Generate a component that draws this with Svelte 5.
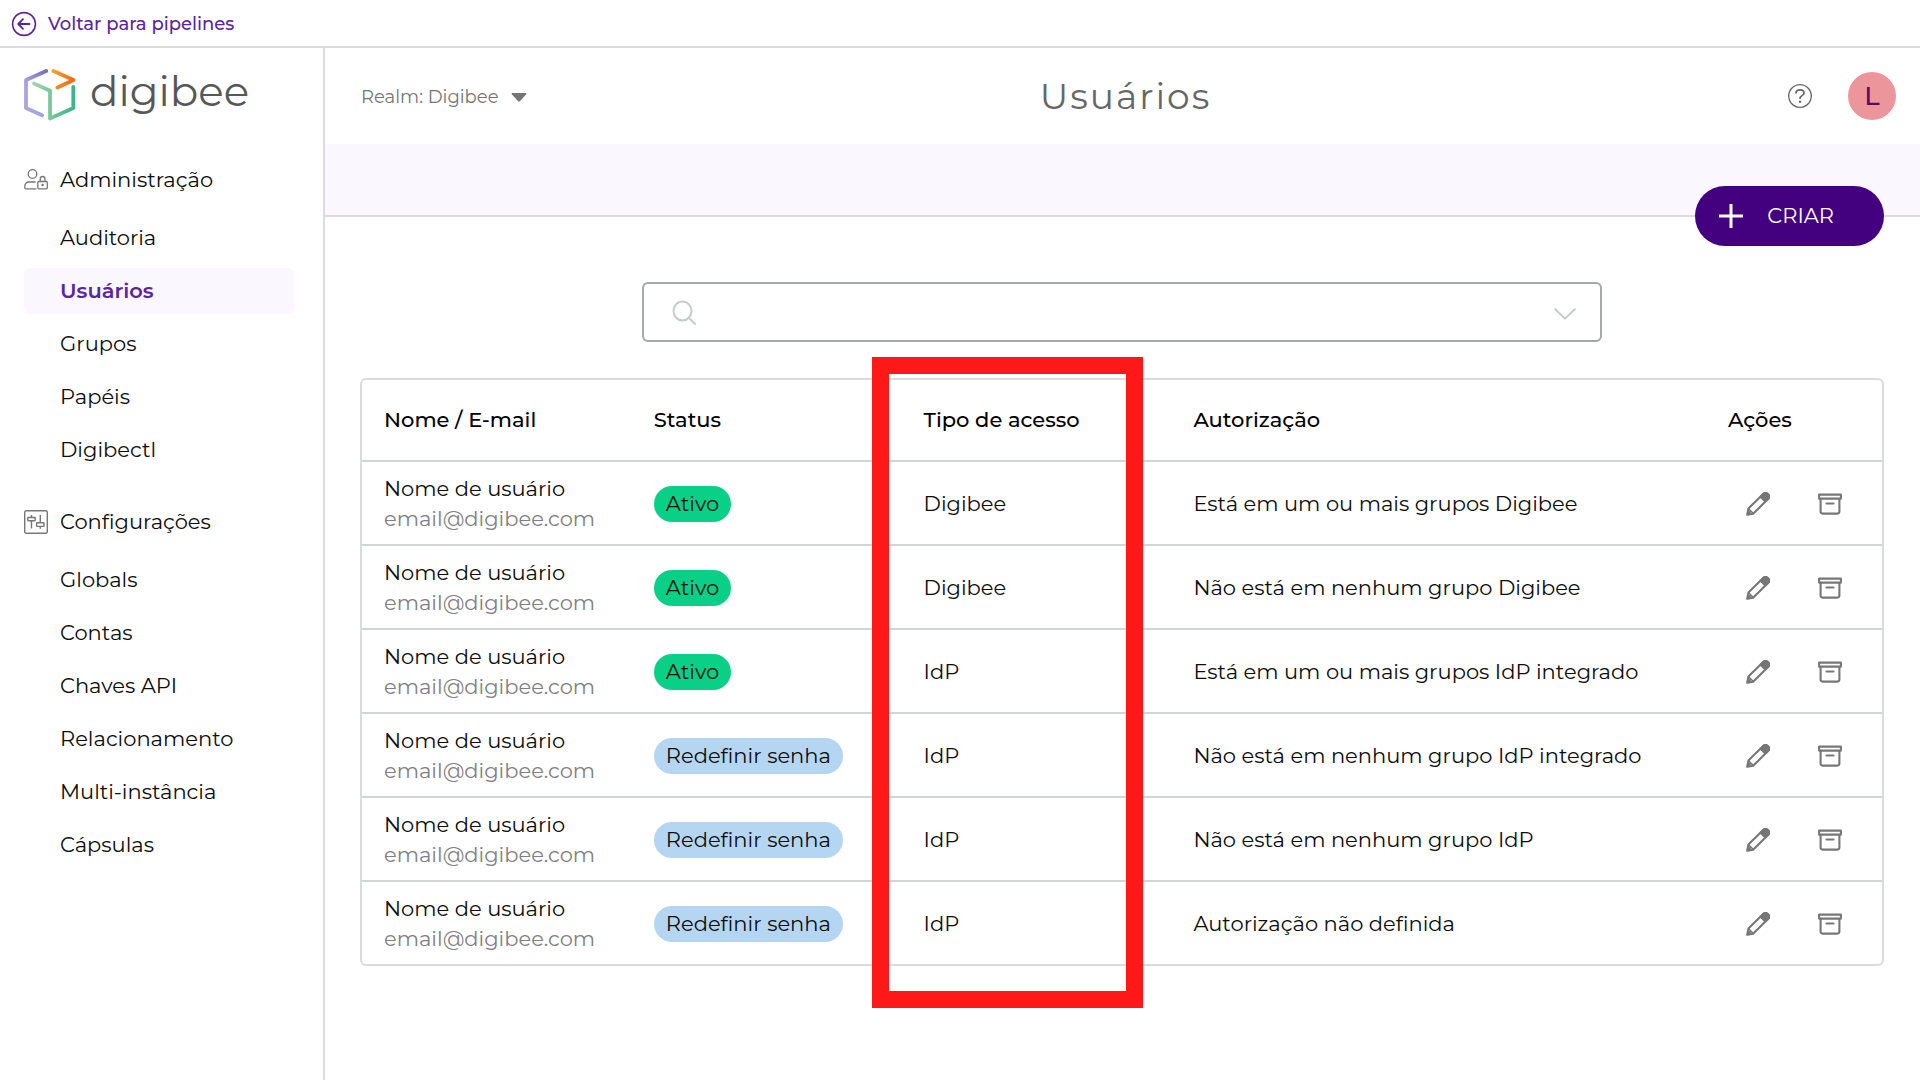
<script lang="ts">
  type Group = { title: string; icon: 'users' | 'settings'; items: string[] };

  const groups: Group[] = [
    {
      title: 'Administração',
      icon: 'users',
      items: ['Auditoria', 'Usuários', 'Grupos', 'Papéis', 'Digibectl']
    },
    {
      title: 'Configurações',
      icon: 'settings',
      items: ['Globals', 'Contas', 'Chaves API', 'Relacionamento', 'Multi-instância', 'Cápsulas']
    }
  ];

  const users = [
    { active: true, access: 'Digibee', auth: 'Está em um ou mais grupos Digibee' },
    { active: true, access: 'Digibee', auth: 'Não está em nenhum grupo Digibee' },
    { active: true, access: 'IdP', auth: 'Está em um ou mais grupos IdP integrado' },
    { active: false, access: 'IdP', auth: 'Não está em nenhum grupo IdP integrado' },
    { active: false, access: 'IdP', auth: 'Não está em nenhum grupo IdP' },
    { active: false, access: 'IdP', auth: 'Autorização não definida' }
  ];

  let current = $state('Usuários');
  let query = $state('');
</script>

<div class="page">
  <div class="topbar">
    <a class="back" href="#pipelines">
      <svg width="26" height="26" viewBox="0 0 26 26" fill="none" stroke="currentColor" stroke-width="1.6" stroke-linecap="round" stroke-linejoin="round" aria-hidden="true">
        <circle cx="13" cy="13" r="11.4" />
        <path d="M18.5 13H7.5M12 8.2 7.2 13l4.8 4.8" stroke-width="1.8" />
      </svg>
      Voltar para pipelines
    </a>
  </div>

  <div class="shell">
    <aside class="sidebar">
      <div class="logo">
        <svg width="52" height="52" viewBox="0 0 52 52" fill="none" stroke-width="3.8" stroke-linecap="round" stroke-linejoin="round" aria-hidden="true">
          <defs>
            <linearGradient id="violet" x1="0" y1="1" x2="1" y2="0">
              <stop offset="0.3" stop-color="#aaa6dc" />
              <stop offset="1" stop-color="#7470bd" />
            </linearGradient>
            <linearGradient id="orange" x1="0" y1="0" x2="1" y2="0.4">
              <stop offset="0" stop-color="#f9a02f" />
              <stop offset="1" stop-color="#ee6d1c" />
            </linearGradient>
            <linearGradient id="green" x1="0" y1="0" x2="1" y2="0">
              <stop offset="0" stop-color="#a5d4ac" />
              <stop offset="1" stop-color="#3eb489" />
            </linearGradient>
          </defs>
          <path d="M22.2 2 2 10.9V39l16 7.2" stroke="url(#violet)" />
          <path d="M29.5 2 49.5 11 33.5 18.5" stroke="url(#orange)" />
          <path d="M10 14.5 26 21.8V49.5L49.3 39V18" stroke="url(#green)" />
        </svg>
        <span>digibee</span>
      </div>

      <nav aria-label="Menu principal">
        {#each groups as group}
          <section class="group">
            <h2>
              {#if group.icon === 'users'}
                <svg width="24" height="24" viewBox="0 0 24 24" fill="none" stroke="currentColor" stroke-width="1.3" stroke-linecap="round" stroke-linejoin="round" aria-hidden="true">
                  <circle cx="8.5" cy="6" r="4.3" />
                  <path d="M12 20.8H1.8a1 1 0 0 1-1-1v-1.8a4 4 0 0 1 4-4h6.4" />
                  <rect x="13.8" y="13.5" width="9.5" height="7.3" rx="1" />
                  <path d="M16.2 13.5v-2.6a2.4 2.4 0 0 1 4.8 0V13.5" />
                  <circle cx="18.6" cy="17" r="0.6" fill="currentColor" />
                </svg>
              {:else}
                <svg width="24" height="24" viewBox="0 0 24 24" fill="none" stroke="currentColor" stroke-width="1.4" stroke-linejoin="round" aria-hidden="true">
                  <rect x="0.7" y="0.7" width="22.6" height="22.6" rx="1.6" />
                  <rect x="3.8" y="7.5" width="7.4" height="3.2" rx="0.6" />
                  <rect x="12.6" y="12.8" width="7.4" height="3.6" rx="0.6" />
                  <path d="M7.5 5v2.5M7.5 10.7V18.5M16.3 5v7.8M16.3 16.4v2.3" />
                </svg>
              {/if}
              {group.title}
            </h2>
            <ul>
              {#each group.items as item}
                <li>
                  <a
                    href="#{item}"
                    class:current={item === current}
                    aria-current={item === current ? 'page' : undefined}
                    onclick={() => (current = item)}>{item}</a>
                </li>
              {/each}
            </ul>
          </section>
        {/each}
      </nav>
    </aside>

    <main>
      <header class="header">
        <button class="realm" type="button">
          Realm: Digibee
          <svg width="16" height="9" viewBox="0 0 16 9" aria-hidden="true">
            <path d="M1.2 0h13.6q1.2 0.4 0.4 1.3L8.9 8.2q-0.9 0.8-1.8 0L0.8 1.3Q0 0.4 1.2 0z" fill="currentColor" />
          </svg>
        </button>
        <h1>Usuários</h1>
        <div class="account">
          <button class="help" type="button" aria-label="Ajuda">
            <svg width="24" height="24" viewBox="0 0 24 24" fill="none" stroke="currentColor" stroke-width="1.3" stroke-linecap="round" aria-hidden="true">
              <circle cx="12" cy="12" r="11.3" />
              <path d="M8 8.9C8.2 6.9 9.8 5.9 12 5.9s4 1.1 4 3.1c0 2.6-4 2.7-4 5.2" stroke-width="1.7" />
              <circle cx="12" cy="17.8" r="1.2" fill="currentColor" stroke="none" />
            </svg>
          </button>
          <button class="avatar" type="button">L</button>
        </div>
      </header>

      <div class="band">
        <button class="create" type="button">
          <svg width="24" height="24" viewBox="0 0 24 24" stroke="currentColor" stroke-width="3" aria-hidden="true">
            <path d="M12 0v24M0 12h24" />
          </svg>
          CRIAR
        </button>
      </div>

      <div class="content">
        <div class="search" role="search">
          <svg width="24" height="26" viewBox="0 0 24 26" fill="none" stroke="currentColor" stroke-width="2" stroke-linecap="round" aria-hidden="true">
            <ellipse cx="10.5" cy="12" rx="9" ry="9.5" />
            <path d="M17 19 23 25" />
          </svg>
          <input type="text" aria-label="Buscar usuários" bind:value={query} />
          <button type="button" aria-label="Abrir filtros">
            <svg width="22" height="16" viewBox="0 0 22 16" fill="none" stroke="currentColor" stroke-width="2" stroke-linecap="round" stroke-linejoin="round" aria-hidden="true">
              <path d="M1.2 5.2 11 14.6l9.8-9.4" />
            </svg>
          </button>
        </div>

        <div class="table-wrap">
          <table>
            <colgroup>
              <col class="narrow" />
              <col class="narrow" />
              <col class="narrow" />
              <col />
              <col class="actions-col" />
            </colgroup>
            <thead>
              <tr>
                <th scope="col">Nome / E-mail</th>
                <th scope="col">Status</th>
                <th scope="col">Tipo de acesso</th>
                <th scope="col">Autorização</th>
                <th scope="col">Ações</th>
              </tr>
            </thead>
            <tbody>
              {#each users as user}
                <tr>
                  <td>
                    <div>Nome de usuário</div>
                    <div class="email">email@digibee.com</div>
                  </td>
                  <td>
                    <span class="badge" class:active={user.active}>{user.active ? 'Ativo' : 'Redefinir senha'}</span>
                  </td>
                  <td>{user.access}</td>
                  <td>{user.auth}</td>
                  <td>
                    <div class="actions">
                      <button type="button" aria-label="Editar">
                        <svg width="24" height="24" viewBox="0 0 24 24" fill="none" stroke="currentColor" stroke-width="2.1" stroke-linejoin="round" aria-hidden="true">
                          <path d="M1.2 22.8 2.4 16.6 17.2 1.9a3 3 0 0 1 4.3 0l0.7 0.7a3 3 0 0 1 0 4.2L7.4 21.6z" />
                          <path d="M14.6 4.7 17.4 1.9a3 3 0 0 1 4.2 0l0.6 0.6a3 3 0 0 1 0 4.2L19.4 9.5z" fill="currentColor" />
                          <path d="M2.4 16.6 7.4 21.6" stroke-width="1.4" />
                          <path d="M1.4 22.6 4.9 19.1" />
                        </svg>
                      </button>
                      <button type="button" aria-label="Arquivar">
                        <svg width="24" height="24" viewBox="0 0 24 24" fill="none" stroke="currentColor" stroke-width="2.1" stroke-linecap="round" stroke-linejoin="round" aria-hidden="true">
                          <path d="M1.1 2.6h21.8v4H1.1zM2.6 6.6v13a2 2 0 0 0 2 2h14.8a2 2 0 0 0 2-2v-13M8.5 11.500h7" />
                        </svg>
                      </button>
                    </div>
                  </td>
                </tr>
              {/each}
            </tbody>
          </table>
          <div class="highlight" aria-hidden="true"></div>
        </div>
      </div>
    </main>
  </div>
</div>

<style>
  :global(body) {
    margin: 0;
    background: #fff;
  }

  .page {
    display: flex;
    flex-direction: column;
    min-height: 100vh;
    font-family: Montserrat, Inter, 'Open Sans', sans-serif;
    font-size: 21px;
    line-height: 30px;
    color: #0c0c0c;
  }

  svg {
    display: block;
    flex: none;
  }

  button {
    padding: 0;
    border: 0;
    background: none;
    font: inherit;
    color: inherit;
    cursor: pointer;
  }

  a {
    color: inherit;
    text-decoration: none;
  }

  .topbar {
    box-sizing: border-box;
    display: flex;
    align-items: center;
    height: 48px;
    padding: 2px 11px 0;
    border-bottom: 2px solid #dcdcdc;
  }

  .back {
    display: flex;
    align-items: center;
    gap: 11px;
    font-size: 18px;
    font-weight: 500;
    color: #5b259f;
  }

  .shell {
    display: flex;
    flex: 1;
  }

  .sidebar {
    box-sizing: border-box;
    flex: none;
    width: 325px;
    padding: 21px 29px 24px 24px;
    border-right: 2px solid #dcdcdc;
  }

  .logo {
    display: flex;
    align-items: flex-start;
    gap: 14px;
    height: 53px;
    margin-bottom: 43px;
    font-size: 42px;
    line-height: 44px;
    color: #575756;
  }

  .group + .group {
    margin-top: 34px;
  }

  .group h2 {
    display: flex;
    align-items: center;
    gap: 12px;
    margin: 0 0 20px;
    font-size: 21px;
    font-weight: 400;
  }

  .group h2 svg {
    color: #777;
  }

  .group ul {
    display: flex;
    flex-direction: column;
    gap: 7px;
    margin: 0;
    padding: 0;
    list-style: none;
  }

  .group li a {
    display: block;
    padding: 8px 36px;
    border-radius: 6px;
  }

  .group li a.current {
    background: #faf7ff;
    font-weight: 600;
    color: #5b259f;
  }

  main {
    flex: 1;
    min-width: 0;
  }

  .header {
    display: grid;
    grid-template-columns: 1fr auto 1fr;
    align-items: center;
    height: 96px;
    padding: 0 24px 0 30px;
    color: #666;
  }

  .realm {
    display: flex;
    align-items: center;
    gap: 12px;
    padding: 2px 0 0 6px;
    font-size: 18px;
    color: #757575;
  }

  h1 {
    margin: 0;
    font-size: 36px;
    font-weight: 400;
    letter-spacing: 2px;
  }

  .account {
    display: flex;
    align-items: center;
    justify-content: flex-end;
    gap: 36px;
  }

  .avatar {
    width: 48px;
    height: 48px;
    border-radius: 50%;
    background: #ec959a;
    font-size: 26px;
    font-weight: 500;
    color: #5b0a5f;
  }

  .band {
    display: flex;
    justify-content: flex-end;
    height: 71px;
    padding-right: 36px;
    border-bottom: 2px solid #dcdcdf;
    background: #faf7ff;
  }

  .create {
    display: flex;
    align-items: center;
    gap: 24px;
    height: 60px;
    margin-top: 42px;
    padding: 0 50px 0 24px;
    border-radius: 30px;
    background: #43007f;
    color: #fff;
  }

  .content {
    padding: 65px 36px 72px 35px;
  }

  .search {
    box-sizing: border-box;
    display: flex;
    align-items: center;
    gap: 16px;
    width: 63%;
    height: 60px;
    margin: 0 auto 36px;
    padding: 0 24px 0 28px;
    border: 2px solid #a4a8a8;
    border-radius: 6px;
    color: #c6cbcb;
  }

  .search input {
    flex: 1;
    min-width: 0;
    padding: 0;
    border: 0;
    outline: 0;
    background: none;
    font: inherit;
    color: #111;
  }

  .table-wrap {
    position: relative;
    border: 2px solid #dadcdc;
    border-radius: 6px;
  }

  table {
    width: 100%;
    table-layout: fixed;
    border-collapse: collapse;
  }

  .narrow {
    width: 17.75%;
  }

  .actions-col {
    width: 176px;
  }

  th,
  td {
    box-sizing: border-box;
    padding: 0 0 0 22px;
    text-align: left;
    vertical-align: middle;
    font-weight: 400;
  }

  th {
    height: 81px;
    font-weight: 500;
    color: #000;
  }

  td {
    height: 84px;
    padding-top: 2px;
    border-top: 2px solid #d3d6d6;
  }

  tr:last-child td {
    height: 83px;
  }

  .email {
    color: #808080;
  }

  .badge {
    display: inline-block;
    padding: 3px 12px;
    border-radius: 18px;
    background: #b5d6f3;
  }

  .badge.active {
    background: #0acf86;
  }

  .actions {
    display: flex;
    gap: 48px;
    padding-left: 18px;
    color: #777;
  }

  /* Frame drawn over the access type column */
  .highlight {
    position: absolute;
    top: -23px;
    bottom: -44px;
    left: 33.55%;
    box-sizing: border-box;
    width: 17.8%;
    border: 17px solid #ff1818;
    pointer-events: none;
  }
</style>
